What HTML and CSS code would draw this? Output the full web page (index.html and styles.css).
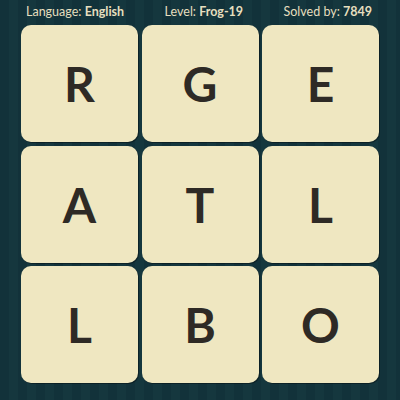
FILE: index.html
```html
<!DOCTYPE html>
<html>
<head>
<meta charset="utf-8">
<link rel="stylesheet" href="styles.css">
</head>
<body>
<div class="page">
  <div class="header">
    <span class="item">Language: <b>English</b></span>
    <span class="item">Level: <b>Frog-19</b></span>
    <span class="item">Solved by: <b>7849</b></span>
  </div>
  <div class="board">
    <div class="tile">R</div>
    <div class="tile">G</div>
    <div class="tile">E</div>
    <div class="tile">A</div>
    <div class="tile">T</div>
    <div class="tile">L</div>
    <div class="tile">L</div>
    <div class="tile">B</div>
    <div class="tile">O</div>
  </div>
</div>
</body>
</html>
```
FILE: styles.css
```css
html, body {
  margin: 0;
  padding: 0;
}
body {
  width: 400px;
  height: 400px;
  overflow: hidden;
  background: repeating-linear-gradient(90deg, #12323a 0 9px, #15373e 9px 18px);
  font-family: Lato, "Open Sans", sans-serif;
}
.page {
  display: flex;
  flex-direction: column;
}
.header {
  height: 25px;
  display: flex;
  justify-content: space-between;
  align-items: center;
  padding: 0 28px 1px 26px;
  color: #e6dfbf;
  font-size: 12.5px;
  line-height: 1;
  box-sizing: border-box;
}
.header b {
  font-weight: 700;
}
.board {
  display: grid;
  grid-template-columns: repeat(3, 117px);
  grid-template-rows: repeat(3, 117px);
  gap: 3.5px;
  padding-left: 21px;
}
.tile {
  background: #efe7c1;
  border-radius: 10px;
  display: flex;
  align-items: center;
  justify-content: center;
  color: #2e2a25;
  font-size: 48px;
  font-weight: 700;
  box-shadow: 1px 1px 0 rgba(0,0,0,0.35);
}
```
